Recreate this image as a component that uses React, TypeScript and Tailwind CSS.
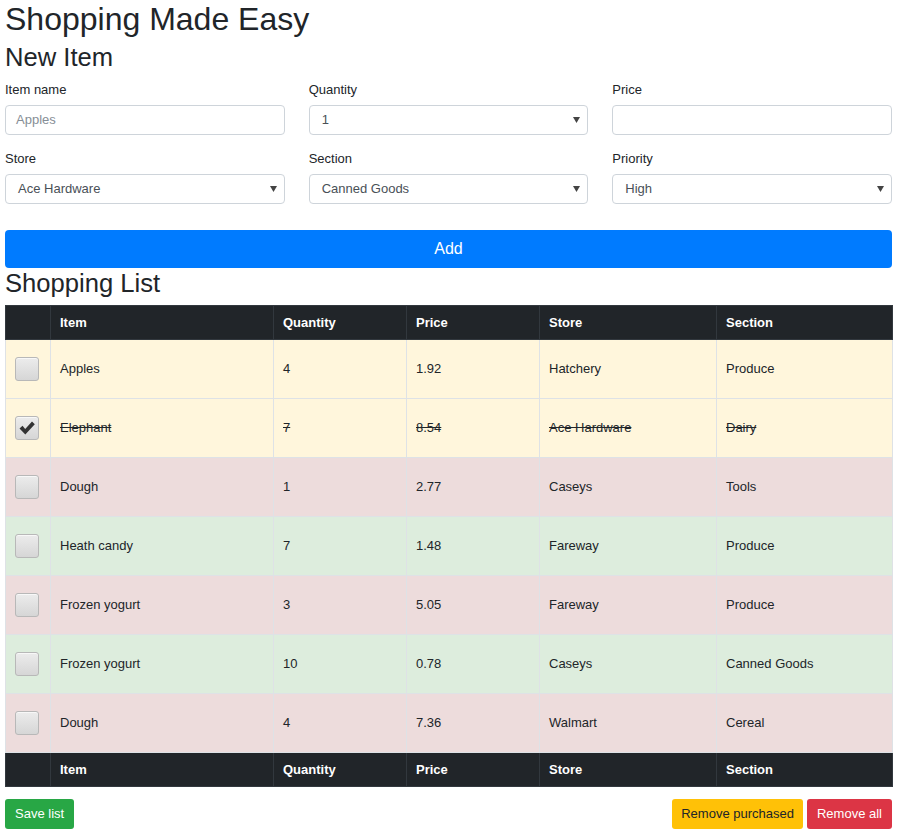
import React from "react";

const rows = [
  { name: "Apples", qty: "4", price: "1.92", store: "Hatchery", section: "Produce", color: "bg-[#fff6dc]", done: false },
  { name: "Elephant", qty: "7", price: "8.54", store: "Ace Hardware", section: "Dairy", color: "bg-[#fff6dc]", done: true },
  { name: "Dough", qty: "1", price: "2.77", store: "Caseys", section: "Tools", color: "bg-[#eddcdc]", done: false },
  { name: "Heath candy", qty: "7", price: "1.48", store: "Fareway", section: "Produce", color: "bg-[#ddeddd]", done: false },
  { name: "Frozen yogurt", qty: "3", price: "5.05", store: "Fareway", section: "Produce", color: "bg-[#eddcdc]", done: false },
  { name: "Frozen yogurt", qty: "10", price: "0.78", store: "Caseys", section: "Canned Goods", color: "bg-[#ddeddd]", done: false },
  { name: "Dough", qty: "4", price: "7.36", store: "Walmart", section: "Cereal", color: "bg-[#eddcdc]", done: false },
];

function Arrow() {
  return (
    <svg className="pointer-events-none absolute right-[7px] top-1/2 -translate-y-1/2" width="7" height="6" viewBox="0 0 7 6">
      <path d="M0 0 L7 0 L3.5 6 Z" fill="#444" />
    </svg>
  );
}

function Field({ label, children }: { label: string; children: React.ReactNode }) {
  return (
    <div className="flex flex-col">
      <label className="text-[13px] leading-[19px] mb-[6px] text-[#212529]">{label}</label>
      {children}
    </div>
  );
}

function FakeSelect({ value }: { value: string }) {
  return (
    <div className="relative h-[30px] rounded-[4px] border border-[#ced4da] bg-white flex items-center pl-[12px] text-[13px] text-[#495057]">
      {value}
      <Arrow />
    </div>
  );
}

function Check({ on }: { on: boolean }) {
  return (
    <div className="w-[24px] h-[24px] rounded-[3px] border border-[#b8b8b8] bg-gradient-to-b from-[#ececec] to-[#d6d6d6] flex items-center justify-center shadow-[inset_0_1px_0_#f8f8f8]">
      {on && (
        <svg width="18" height="16" viewBox="0 0 18 16">
          <path d="M1.5 8.5 L4.5 5.8 L7.2 9 L14 1.5 L16.8 4.2 L7.3 14.5 Z" fill="#333" />
        </svg>
      )}
    </div>
  );
}

const cols = ["", "Item", "Quantity", "Price", "Store", "Section"];

function HeadRow({ h }: { h: string }) {
  return (
    <tr className={`bg-[#212529] text-white ${h}`}>
      {cols.map((c, i) => (
        <th key={i} className="border border-[#32383e] px-[9px] text-left font-bold text-[13px]">
          {c}
        </th>
      ))}
    </tr>
  );
}

export default function App() {
  return (
    <div className="pl-[5px] text-[#212529] bg-white min-h-[836px]" style={{ fontFamily: '"Liberation Sans", Arial, sans-serif' }}>
      <div className="w-[887px]">
        <h1 className="text-[32px] leading-[38px] font-normal pt-0">Shopping Made Easy</h1>
        <h2 className="text-[25.6px] leading-[31px] font-normal mt-[4px] mb-[7px]">New Item</h2>
        <div className="grid grid-cols-3 gap-x-[24px] gap-y-[14px]">
          <Field label="Item name">
            <div className="h-[30px] rounded-[4px] border border-[#ced4da] bg-white flex items-center pl-[10px] text-[13px] text-[#868e96]">Apples</div>
          </Field>
          <Field label="Quantity">
            <FakeSelect value="1" />
          </Field>
          <Field label="Price">
            <div className="h-[30px] rounded-[4px] border border-[#ced4da] bg-white" />
          </Field>
          <Field label="Store">
            <FakeSelect value="Ace Hardware" />
          </Field>
          <Field label="Section">
            <FakeSelect value="Canned Goods" />
          </Field>
          <Field label="Priority">
            <FakeSelect value="High" />
          </Field>
        </div>
        <button className="mt-[26px] w-full h-[38px] rounded-[4px] bg-[#007bff] text-white text-[16px]">Add</button>
        <h2 className="text-[25.6px] leading-[31px] font-normal mb-[6px]">Shopping List</h2>
        <table className="w-[887px] table-fixed border-collapse text-[13px]">
          <colgroup>
            <col className="w-[45px]" />
            <col className="w-[223px]" />
            <col className="w-[133px]" />
            <col className="w-[133px]" />
            <col className="w-[177px]" />
            <col className="w-[176px]" />
          </colgroup>
          <thead>
            <HeadRow h="h-[34px]" />
          </thead>
          <tbody>
            {rows.map((r, i) => (
              <tr key={i} className={`${r.color} h-[59px]`}>
                <td className="border border-[#dee2e6] pl-[9px]">
                  <Check on={r.done} />
                </td>
                {[r.name, r.qty, r.price, r.store, r.section].map((v, j) => (
                  <td key={j} className={`border border-[#dee2e6] px-[9px] ${r.done ? "line-through" : ""}`}>
                    {v}
                  </td>
                ))}
              </tr>
            ))}
          </tbody>
          <tfoot>
            <HeadRow h="h-[34px]" />
          </tfoot>
        </table>
        <div className="flex items-center mt-[12px] text-[13px]">
          <button className="h-[30px] px-[10px] rounded-[3px] bg-[#28a745] text-white">Save list</button>
          <div className="flex-1" />
          <button className="h-[30px] px-[9px] rounded-[3px] bg-[#ffc107] text-[#212529]">Remove purchased</button>
          <button className="h-[30px] px-[10px] rounded-[3px] bg-[#dc3545] text-white ml-[4px]">Remove all</button>
        </div>
      </div>
    </div>
  );
}
